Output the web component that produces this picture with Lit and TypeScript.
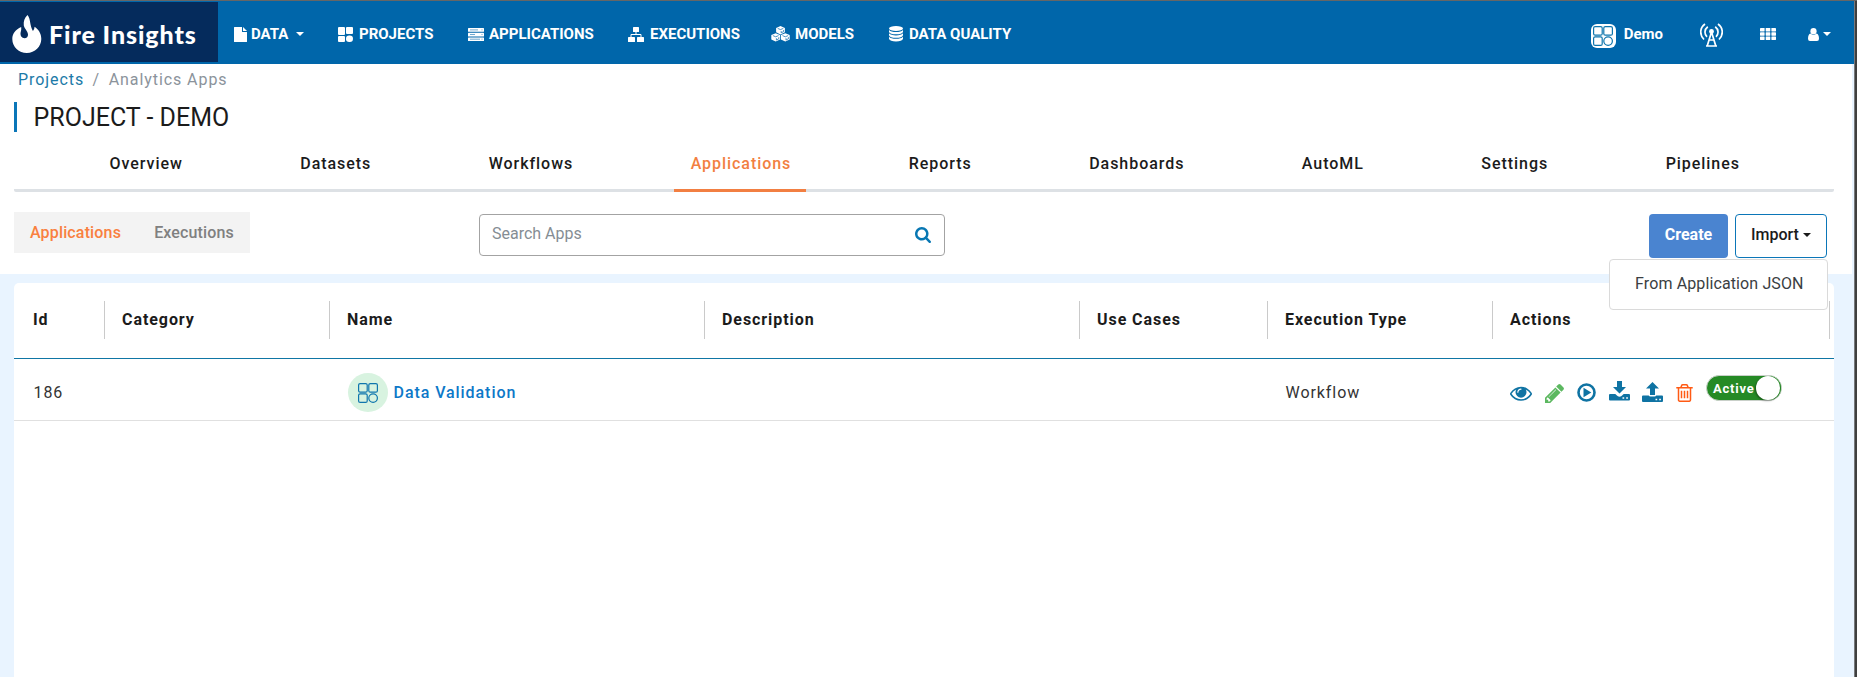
import { LitElement, html, css, svg } from "lit";

const fa = (cls: string, d: string, vb = "0 0 1792 1792") =>
  html`<svg class=${cls} viewBox=${vb} fill="currentColor"><path d=${d}></path></svg>`;

const EYE = "M1664 960q-152-236-381-353 61 104 61 225 0 185-131.500 316.500t-316.500 131.500-316.500-131.500-131.500-316.500q0-121 61-225-229 117-381 353 133 205 333.500 326.500t434.500 121.500 434.500-121.500 333.500-326.500zm-720-384q0-20-14-34t-34-14q-125 0-214.500 89.500t-89.500 214.500q0 20 14 34t34 14 34-14 14-34q0-86 61-147t147-61q20 0 34-14t14-34zm848 384q0 34-20 69-140 230-376.500 368.500t-499.500 138.500-499.500-139-376.500-368q-20-35-20-69t20-69q140-229 376.500-368t499.500-139 499.500 139 376.500 368q20 35 20 69z";
const PENCIL = "M491 1536l91-91-235-235-91 91v107h128v128h107zm523-928q0-22-22-22-10 0-17 7l-542 542q-7 7-7 17 0 22 22 22 10 0 17-7l542-542q7-7 7-17zm-54-192l416 416-832 832h-416v-416zm683 96q0 53-37 90l-166 166-416-416 166-165q36-38 90-38 53 0 91 38l235 234q37 39 37 91z";
const SEARCH = "M1216 832q0-185-131.500-316.500t-316.500-131.500-316.500 131.500-131.500 316.500 131.500 316.500 316.500 131.500 316.500-131.500 131.500-316.500zm512 832q0 52-38 90t-90 38q-54 0-90-38l-343-342q-179 124-399 124-143 0-273.500-55.500t-225-150-150-225-55.500-273.500 55.500-273.500 150-225 225-150 273.500-55.500 273.500 55.500 225 150 150 225 55.500 273.500q0 220-124 399l343 343q37 37 37 90z";
const TRASH = "M704 736v576q0 14-9 23t-23 9h-64q-14 0-23-9t-9-23v-576q0-14 9-23t23-9h64q14 0 23 9t9 23zm256 0v576q0 14-9 23t-23 9h-64q-14 0-23-9t-9-23v-576q0-14 9-23t23-9h64q14 0 23 9t9 23zm256 0v576q0 14-9 23t-23 9h-64q-14 0-23-9t-9-23v-576q0-14 9-23t23-9h64q14 0 23 9t9 23zm128 724v-948h-896v948q0 22 7 40.500t14.500 27 10.500 8.500h832q3 0 10.500-8.500t14.500-27 7-40.500zm-672-1076h448l-48-117q-7-9-17-11h-317q-10 2-17 11zm928 32v64q0 14-9 23t-23 9h-96v948q0 83-47 143.500t-113 60.500h-832q-66 0-113-58.500t-47-141.500v-952h-96q-14 0-23-9t-9-23v-64q0-14 9-23t23-9h309l70-167q15-37 54-63t79-26h320q40 0 79 26t54 63l70 167h309q14 0 23 9t9 23z";

const cube = (x: number, y: number) => svg`<g transform="translate(${x} ${y})">
  <path d="M4.500 0L8.900 1.900V6.300L4.500 8.400L.1 6.300V1.900Z" fill="#fff"></path>
  <path d="M1.700 2.400L4.500 3.600L7.300 2.400M5.200 5V7M7.600 4V5.600L5.400 6.700" stroke="#0066aa" stroke-width=".7" fill="none"></path></g>`;

const NAV = [
  { label: "DATA", icon: html`<svg width="17" height="15" viewBox="0 0 17 15" fill="#fff"><path d="M0 .5Q0 0 .5 0H8V4.500Q8 5 8.500 5H13V14.500Q13 15 12.500 15H.5Q0 15 0 14.500ZM9 0L13 4H9Z"></path></svg>`, caret: true },
  { label: "PROJECTS", icon: html`<svg width="21" height="15" viewBox="0 0 21 15" fill="#fff"><rect width="7" height="8" rx="1"></rect><rect x="8" width="7" height="7" rx="1"></rect><rect y="9" width="7" height="6" rx="1"></rect><rect x="8" y="8.500" width="7" height="6.500" rx="3.200"></rect></svg>` },
  { label: "APPLICATIONS", icon: html`<svg width="21" height="15" viewBox="0 0 21 15"><g fill="#fff"><rect y="1" width="16" height="3.700" rx=".5"></rect><rect y="5.700" width="16" height="3.700" rx=".5"></rect><rect y="10.400" width="16" height="3.600" rx=".5"></rect></g><path d="M2 2.900H10M2 7.500H7M2 12.200H12M13.500 2.900H14.500M13.500 7.500H14.500M13.500 12.200H14.500" stroke="#0066aa" stroke-opacity=".7" stroke-width=".8"></path></svg>` },
  { label: "EXECUTIONS", icon: html`<svg width="22" height="15" viewBox="0 0 22 15" fill="#fff"><rect x="5" width="6" height="5" rx=".6"></rect><rect y="10" width="7" height="5" rx=".6"></rect><rect x="9" y="10" width="7" height="5" rx=".6"></rect><path d="M8 5V7.500M3 10V7.500H13V10" fill="none" stroke="#fff"></path></svg>` },
  { label: "MODELS", icon: html`<svg width="24" height="16" viewBox="0 0 24 16">${cube(5, 0)}${cube(0.200, 7.200)}${cube(9.800, 7.200)}</svg>` },
  { label: "DATA QUALITY", icon: html`<svg width="20" height="16" viewBox="0 0 20 16" fill="#fff"><ellipse cx="7" cy="2.500" rx="7" ry="2.500"></ellipse><path d="M0 3.900Q2 6 7 6T14 3.900V6Q13 8.300 7 8.300T0 6ZM0 7.300Q2 9.400 7 9.400T14 7.300V9.200Q13 11.800 7 11.800T0 9.200ZM0 10.700Q2 12.800 7 12.800T14 10.700V12.800Q13 15.500 7 15.500T0 12.800Z"></path></svg>` },
];

const TABS = ["Overview", "Datasets", "Workflows", "Applications", "Reports", "Dashboards", "AutoML", "Settings", "Pipelines"];
const COLS = ["Id", "Category", "Name", "Description", "Use Cases", "Execution Type", "Actions"];

const tiles = (size: number) => html`<svg width=${size} height=${size} viewBox="0 0 20 20" fill="none" stroke="#0f76ad" stroke-width="1.200"><rect x=".6" y=".6" width="8.600" height="8.600" rx="1.500"></rect><rect x="10.800" y=".6" width="8.600" height="8.600" rx="1.500"></rect><rect x=".6" y="10.800" width="8.600" height="8.600" rx="1.500"></rect><circle cx="15.100" cy="15.100" r="4.300"></circle></svg>`;

class AppRoot extends LitElement {
  static styles = css`
    :host { display: flex; width: 1857px; height: 677px; overflow: hidden; font: 16px/24px Roboto, sans-serif; color: #1b1b1b; background: #fff; border-top: 1px solid #666; box-sizing: border-box; }
    * { box-sizing: border-box; }
    svg { display: block; flex: none; }
    .page { width: 1854px; display: flex; flex-direction: column; }
    .edge { width: 3px; background: #3f3f3f; border-left: 1px solid #77797c; }
    header { height: 63px; background: #0066aa; display: flex; color: #fff; font-size: 15px; font-weight: 700; padding-top: 1px; flex: none; }
    .logo { width: 218px; height: 60px; background: #052b5c; display: flex; align-items: flex-start; padding: 13px 0 0 12px; gap: 7px; }
    .brand { font: 900 25px/30px Lato, sans-serif; letter-spacing: .9px; padding-top: 4px; white-space: nowrap; }
    .nav { display: grid; grid-template-columns: 104px 130px 160px 143px 118px 130px; padding-left: 16px; height: 60px; padding-top: 4px; align-items: center; }
    .item { display: flex; align-items: center; white-space: nowrap; line-height: 20px; }
    .caret { border: 4px solid transparent; border-top-color: currentColor; border-bottom: 0; flex: none; }
    .item .caret { margin-left: 8px; }
    .right { margin-left: auto; display: flex; align-items: center; height: 60px; padding: 4px 23px 0 0; }
    .app { width: 25px; height: 24px; border-radius: 6px; background: #fff; display: flex; align-items: center; justify-content: center; margin: 3px 8px 0 0; }
    .ant { margin: 1px 37px 0 37px; }
    .grid { margin-right: 32px; }
    .user { margin-right: 4px; }
    .body { background: #e9f4ff; flex: 1; }
    .top { background: #fff; width: 1852px; height: 210px; padding: 3px 18px 0 14px; }
    .crumbs { padding-left: 4px; letter-spacing: .93px; color: #8b939b; line-height: 25px; height: 25px; }
    .crumbs a { color: #1c7aa8; }
    .crumbs i { font-style: normal; margin: 0 8.500px; }
    h1 { margin: 10px 0 0; height: 30px; border-left: 3px solid #0b76b8; padding-left: 16.500px; font: 400 25px/32px Roboto, sans-serif; }
    .tabs { display: flex; justify-content: space-between; height: 60px; border-bottom: 3px solid #dde1e5; padding: 19px 79px 0; border-radius: 2px; }
    .tab { height: 41px; padding: 0 15px 0 16.500px; font-weight: 500; letter-spacing: .95px; line-height: 26px; }
    .tab.on { color: #f27f42; border-bottom: 3px solid #f27f42; }
    .tools { display: flex; align-items: flex-start; padding-top: 20px; position: relative; }
    .sub { width: 236px; height: 41px; background: #f3f3f3; display: flex; padding: 0 16px; justify-content: space-between; font-weight: 500; letter-spacing: .15px; line-height: 41px; color: #808080; }
    .sub .on { color: #f9803f; }
    .search { margin: 2px 0 0 229px; width: 466px; height: 42px; border: 1px solid #a3a3a3; border-radius: 4px; display: flex; justify-content: space-between; padding: 7px 13px 0 12px; color: #858d94; }
    .sicon { width: 16px; height: 16px; color: #0877b3; margin-top: 5px; }
    .btns { margin: 2px 7px 0 auto; display: flex; gap: 7px; }
    .btn { height: 44px; border-radius: 4px; line-height: 42px; }
    .create { width: 79px; background: #4a84d0; color: #fff; font-weight: 700; text-align: center; }
    .import { width: 92px; border: 1px solid #0b76b8; font-weight: 500; display: flex; padding-left: 15px; line-height: 40px; gap: 4px; }
    .import .caret { margin-top: 17.500px; }
    .menu { position: absolute; right: 6px; top: 67px; width: 219px; height: 51px; border: 1px solid #dadada; border-radius: 4px; background: #fff; color: #3a3e42; line-height: 48px; padding-left: 25px; letter-spacing: .12px; white-space: nowrap; }
    .card { margin: 9px 0 0 14px; width: 1820px; height: 420px; background: #fff; border-radius: 5px 5px 0 0; letter-spacing: .93px; }
    .cells { display: grid; grid-template-columns: 91px 225px 375px 375px 188px 225px 337px; }
    .head { height: 76px; border-bottom: 1px solid #0f76a5; padding-top: 18px; font-weight: 700; }
    .th { height: 38px; border-right: 1px solid #cacaca; padding-left: 17px; line-height: 38px; }
    .row { height: 62px; border-bottom: 1px solid #e0e0e0; padding-top: 5px; align-items: center; color: #333; }
    .td { padding-left: 17.500px; display: flex; align-items: center; }
    .th:first-child { padding-left: 19px; }
    .td:first-child { padding-left: 19.500px; }
    .round { width: 40px; height: 39px; border-radius: 50%; background: #d8f3e0; display: flex; align-items: center; justify-content: center; margin-right: 6px; }
    .link { color: #0d78c8; font-weight: 500; }
    .acts { color: #0f73a3; height: 57px; align-items: flex-start; padding: 16px 0 0 17px; }
    .eye { width: 22px; height: 22px; margin-top: 2px; }
    .pencil { width: 19px; height: 19px; color: #5cb860; margin: 4px 0 0 13px; }
    .play { margin: 3px 0 0 13px; }
    .down { margin: 1px 0 0 13px; }
    .up { margin: 2px 0 0 12px; }
    .trash { width: 17px; height: 18px; color: #ff5a14; margin: 4px 0 0 13px; }
    .toggle { width: 76px; height: 26px; border-radius: 13px; background: #258a25; border: 1px solid #c9d0c9; margin: -5px 0 0 13px; display: flex; justify-content: space-between; font-size: 13px; font-weight: 700; letter-spacing: .8px; line-height: 26px; color: #fff; padding-left: 6px; }
    .knob { width: 24px; height: 24px; border-radius: 50%; background: #fff; margin-right: 0; box-shadow: -1px 1px 2px rgba(0,0,0,.35), 1px 0 0 #258a25; margin-right: 1px; flex: none; }
  `;
  render() {
    return html`<div class="page">
      <header>
        <div class="logo">
          <svg width="30" height="38" viewBox="0 0 30 38" fill="#fff"><path d="M15.500 0C12.500 2.500 11.300 6.500 11.800 10.500C12.300 13.500 15.800 16 16 19.500C16.100 21.700 14.700 23.200 12.500 23.200C9.800 23.200 8.300 21.200 8.500 18.600C8.600 16.500 9.600 15.500 9.200 12C3.500 14.500 .3 18.500 .3 24C.3 32 7 38 14.800 38C23 38 29.300 31.500 29.300 24C29.300 18.500 26.500 14.500 22.500 11.800C22.500 13.500 22 15 20.900 16C19.500 13.500 18.500 10 18 6.500C17.700 4 17 2 15.500 0Z"></path></svg>
          <span class="brand">Fire Insights</span>
        </div>
        <nav class="nav">${NAV.map(n => html`<div class="item">${n.icon}<span>${n.label}</span>${n.caret ? html`<i class="caret"></i>` : ""}</div>`)}</nav>
        <div class="right">
          <span class="app">${tiles(20)}</span><span>Demo</span>
          <svg class="ant" width="23" height="24" viewBox="0 0 23 24" fill="none" stroke="#fff" stroke-width="1.700"><path d="M5 1C-.5 5 -.5 12 4 16.500M18 1C23.500 5 23.500 12 19 16.500M7.800 3.800C4.200 6.500 4.200 11 7 13.800M15.200 3.800C18.800 6.500 18.800 11 16 13.800"></path><path d="M11.500 9L7.200 23M11.500 9L15.800 23M9.500 17H13.500M6 23H17"></path><circle cx="11.500" cy="8.500" r="1.600" fill="#fff"></circle></svg>
          <svg class="grid" width="16" height="12" viewBox="0 0 16 12" fill="#fff">${[0, 5.700, 11.400].map(x => [0, 4.250, 8.500].map(y => svg`<rect x=${x} y=${y} width="4.600" height="3.400" rx=".4"></rect>`))}</svg>
          <svg class="user" width="11" height="13" viewBox="0 0 11 13" fill="#fff"><ellipse cx="5.500" cy="3.300" rx="3.100" ry="3.300"></ellipse><path d="M2.500 5.600Q5.500 8.500 8.500 5.600Q11 6.300 11 10.700Q11 13 9 13H2Q0 13 0 10.700Q0 6.300 2.500 5.600Z"></path></svg>
          <i class="caret"></i>
        </div>
      </header>
      <div class="body">
        <div class="top">
          <div class="crumbs"><a>Projects</a><i>/</i><span>Analytics Apps</span></div>
          <h1>PROJECT - DEMO</h1>
          <div class="tabs">${TABS.map(t => html`<span class="tab ${t === "Applications" ? "on" : ""}">${t}</span>`)}</div>
          <div class="tools">
            <div class="sub"><span class="on">Applications</span><span>Executions</span></div>
            <div class="search"><span>Search Apps</span>${fa("sicon", SEARCH, "64 128 1664 1664")}</div>
            <div class="btns"><div class="btn create">Create</div><div class="btn import">Import<i class="caret"></i></div></div>
            <div class="menu">From Application JSON</div>
          </div>
        </div>
        <div class="card">
          <div class="cells head">${COLS.map(c => html`<div class="th">${c}</div>`)}</div>
          <div class="cells row">
            <div class="td">186</div><div class="td"></div>
            <div class="td"><span class="round">${tiles(20)}</span><span class="link">Data Validation</span></div>
            <div class="td"></div><div class="td"></div><div class="td">Workflow</div>
            <div class="td acts">
              ${fa("eye", EYE)}${fa("pencil", PENCIL, "128 144 1520 1520")}
              <svg class="play" width="19" height="19" viewBox="0 0 19 19"><circle cx="9.500" cy="9.500" r="8" fill="none" stroke="currentColor" stroke-width="2.600"></circle><path d="M6.500 4.800V14.200L14.300 9.500Z" fill="currentColor"></path></svg>
              <svg class="down" width="21" height="20" viewBox="0 0 21 20" fill="currentColor"><path d="M8 0H13V6H17L10.500 12.500L4 6H8Z"></path><path fill-rule="evenodd" d="M1 13H6.300L8.500 15Q10.500 16.500 12.500 15L14.700 13H20Q21 13 21 14V18.500Q21 19.500 20 19.500H1Q0 19.500 0 18.500V14Q0 13 1 13ZM13.500 16.200V17.700H15.200V16.200ZM17.200 16.200V17.700H18.900V16.200Z"></path></svg>
              <svg class="up" width="21" height="20" viewBox="0 0 21 20" fill="currentColor"><path d="M10.500 0L17 6.500H13V13H8V6.500H4Z"></path><path fill-rule="evenodd" d="M1 13.500H6.700Q7.200 14.600 8.500 14.600H12.500Q13.800 14.600 14.300 13.500H20Q21 13.500 21 14.500V19Q21 20 20 20H1Q0 20 0 19V14.500Q0 13.500 1 13.500ZM13.500 16.700V18.200H15.200V16.700ZM17.200 16.700V18.200H18.900V16.700Z"></path></svg>
              ${fa("trash", TRASH, "192 128 1408 1536")}
              <span class="toggle">Active<i class="knob"></i></span>
            </div>
          </div>
        </div>
      </div>
    </div><div class="edge"></div>`;
  }
}
customElements.define("app-root", AppRoot);
